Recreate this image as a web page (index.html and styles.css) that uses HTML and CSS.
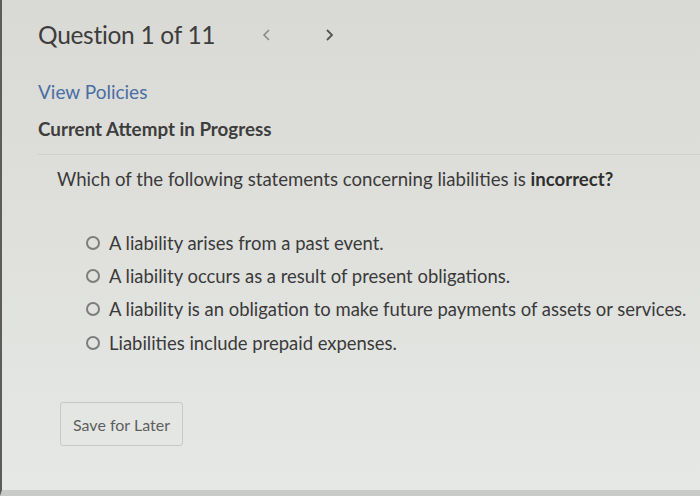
FILE: index.html
```html
<!DOCTYPE html>
<html>
<head>
<meta charset="utf-8">
<link rel="stylesheet" href="styles.css">
</head>
<body>
<div class="page">
  <div class="header">
    <h1 class="title">Question 1 of 11</h1>
    <div class="nav">
      <span class="arrow prev"><svg width="12" height="16" viewBox="0 0 12 16"><path d="M8 3 L3 8 L8 13" fill="none" stroke="#8a8a8a" stroke-width="1.6"/></svg></span>
      <span class="arrow next"><svg width="12" height="16" viewBox="0 0 12 16"><path d="M4 3 L9 8 L4 13" fill="none" stroke="#555" stroke-width="1.8"/></svg></span>
    </div>
  </div>
  <a class="policies">View Policies</a>
  <div class="attempt">Current Attempt in Progress</div>
  <div class="panel">
    <p class="question">Which of the following statements concerning liabilities is <b>incorrect?</b></p>
    <ul class="options">
      <li><span class="radio"></span>A liability arises from a past event.</li>
      <li><span class="radio"></span>A liability occurs as a result of present obligations.</li>
      <li><span class="radio"></span>A liability is an obligation to make future payments of assets or services.</li>
      <li><span class="radio"></span>Liabilities include prepaid expenses.</li>
    </ul>
    <button class="save">Save for Later</button>
  </div>
</div>
</body>
</html>
```

FILE: styles.css
```css
html, body {
  margin: 0;
  padding: 0;
  height: 100%;
}
body {
  font-family: Lato, "Open Sans", sans-serif;
  background: linear-gradient(180deg, #d9d9d5 0%, #dedfdb 40%, #e4e6e3 85%, #e6e8e6 100%);
  overflow: hidden;
}
.page {
  height: 496px;
  box-sizing: border-box;
  border-left: 2px solid #5c5c5a;
  border-bottom: 6px solid #c9cbc8;
  padding-left: 36px;
}
.header {
  display: flex;
  align-items: center;
  padding-top: 17px;
  height: 34px;
  margin-bottom: 1px;
}
.title {
  margin: 0;
  font-weight: 400;
  font-size: 24.5px;
  color: #3d3d3d;
  letter-spacing: -0.3px;
}
.nav {
  display: flex;
  gap: 50px;
  margin-left: 46px;
  padding-top: 2px;
}
.arrow { display: flex; }
.policies {
  display: block;
  margin-top: 29px;
  font-size: 19px;
  color: #4a6ea3;
  line-height: 24px;
}
.attempt {
  margin-top: 13px;
  font-size: 18.8px;
  font-weight: 700;
  color: #3d3d3d;
  line-height: 24px;
}
.panel {
  margin-top: 13px;
  border-top: 1px solid #cfd0cc;
  padding-left: 19px;
}
.question {
  margin: 11px 0 0;
  font-size: 18.6px;
  color: #3a3a3a;
  line-height: 26px;
}
.question b { color: #2f2f2f; }
.options {
  list-style: none;
  margin: 34px 0 0;
  padding: 0 0 0 30px;
}
.options li {
  display: flex;
  align-items: center;
  font-size: 18.45px;
  color: #3a3a3a;
  height: 33.3px;
}
.radio {
  width: 10px;
  height: 10px;
  border: 2px solid #7d7d7d;
  border-radius: 50%;
  margin-right: 9px;
  margin-left: -1px;
  flex: none;
}
.save {
  margin-top: 43px;
  margin-left: 3px;
  width: 123px;
  height: 44px;
  font-family: Lato, sans-serif;
  font-size: 16px;
  color: #5e5e5e;
  background: transparent;
  border: 1px solid #c8c9c6;
  border-radius: 3px;
}
```
